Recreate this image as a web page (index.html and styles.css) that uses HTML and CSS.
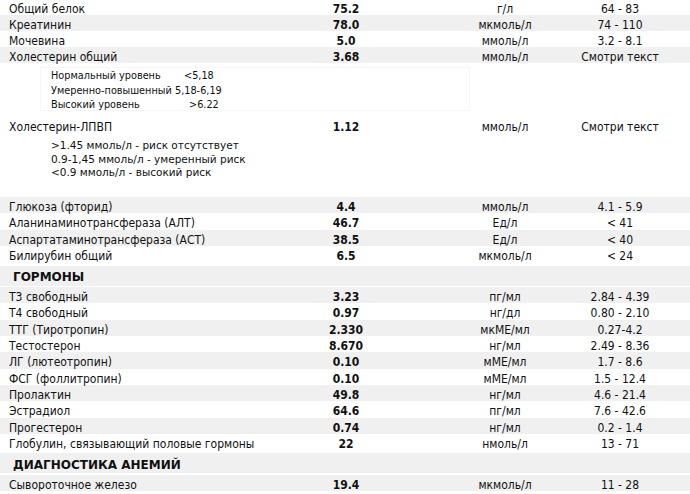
FILE: index.html
```html
<!DOCTYPE html>
<html lang="ru">
<head>
<meta charset="utf-8">
<title>Результаты анализов</title>
<link rel="stylesheet" href="styles.css">
</head>
<body>
<div class="report">
  <div class="section first">
    <div class="row"><div class="name">Общий белок</div><div class="val">75.2</div><div class="unit">г/л</div><div class="ref">64 - 83</div></div>
    <div class="row alt"><div class="name">Креатинин</div><div class="val">78.0</div><div class="unit">мкмоль/л</div><div class="ref">74 - 110</div></div>
    <div class="row"><div class="name">Мочевина</div><div class="val">5.0</div><div class="unit">ммоль/л</div><div class="ref">3.2 - 8.1</div></div>
    <div class="row alt"><div class="name">Холестерин общий</div><div class="val">3.68</div><div class="unit">ммоль/л</div><div class="ref">Смотри текст</div></div>
  </div>

  <div class="note-box">
    <div class="note-grid">
      <div>Нормальный уровень</div><div class="nv nv1">&lt;5,18</div>
      <div>Умеренно-повышенный</div><div class="nv">5,18-6,19</div>
      <div>Высокий уровень</div><div class="nv nv3">&gt;6.22</div>
    </div>
  </div>

  <div class="row lone"><div class="name">Холестерин-ЛПВП</div><div class="val">1.12</div><div class="unit">ммоль/л</div><div class="ref">Смотри текст</div></div>

  <div class="note-list">
    <div>&gt;1.45 ммоль/л - риск отсутствует</div>
    <div>0.9-1,45 ммоль/л - умеренный риск</div>
    <div>&lt;0.9 ммоль/л - высокий риск</div>
  </div>

  <div class="section">
    <div class="row alt"><div class="name">Глюкоза (фторид)</div><div class="val">4.4</div><div class="unit">ммоль/л</div><div class="ref">4.1 - 5.9</div></div>
    <div class="row"><div class="name">Аланинаминотрансфераза (АЛТ)</div><div class="val">46.7</div><div class="unit">Ед/л</div><div class="ref">&lt; 41</div></div>
    <div class="row alt"><div class="name">Аспартатаминотрансфераза (АСТ)</div><div class="val">38.5</div><div class="unit">Ед/л</div><div class="ref">&lt; 40</div></div>
    <div class="row"><div class="name">Билирубин общий</div><div class="val">6.5</div><div class="unit">мкмоль/л</div><div class="ref">&lt; 24</div></div>
  </div>

  <div class="head">ГОРМОНЫ</div>

  <div class="section">
    <div class="row alt"><div class="name">Т3 свободный</div><div class="val">3.23</div><div class="unit">пг/мл</div><div class="ref">2.84 - 4.39</div></div>
    <div class="row"><div class="name">Т4 свободный</div><div class="val">0.97</div><div class="unit">нг/дл</div><div class="ref">0.80 - 2.10</div></div>
    <div class="row alt"><div class="name">ТТГ (Тиротропин)</div><div class="val">2.330</div><div class="unit">мкМЕ/мл</div><div class="ref">0.27-4.2</div></div>
    <div class="row"><div class="name">Тестостерон</div><div class="val">8.670</div><div class="unit">нг/мл</div><div class="ref">2.49 - 8.36</div></div>
    <div class="row alt"><div class="name">ЛГ (лютеотропин)</div><div class="val">0.10</div><div class="unit">мМЕ/мл</div><div class="ref">1.7 - 8.6</div></div>
    <div class="row"><div class="name">ФСГ (фоллитропин)</div><div class="val">0.10</div><div class="unit">мМЕ/мл</div><div class="ref">1.5 - 12.4</div></div>
    <div class="row alt"><div class="name">Пролактин</div><div class="val">49.8</div><div class="unit">нг/мл</div><div class="ref">4.6 - 21.4</div></div>
    <div class="row"><div class="name">Эстрадиол</div><div class="val">64.6</div><div class="unit">пг/мл</div><div class="ref">7.6 - 42.6</div></div>
    <div class="row alt"><div class="name">Прогестерон</div><div class="val">0.74</div><div class="unit">нг/мл</div><div class="ref">0.2 - 1.4</div></div>
    <div class="row"><div class="name">Глобулин, связывающий половые гормоны</div><div class="val">22</div><div class="unit">нмоль/л</div><div class="ref">13 - 71</div></div>
  </div>

  <div class="head head2">ДИАГНОСТИКА АНЕМИЙ</div>

  <div class="section">
    <div class="row alt"><div class="name">Сывороточное железо</div><div class="val">19.4</div><div class="unit">мкмоль/л</div><div class="ref">11 - 28</div></div>
  </div>
</div>
</body>
</html>
```

FILE: styles.css
```css
html, body {
  margin: 0;
  padding: 0;
  background: #ffffff;
}

body {
  font-family: "DejaVu Sans Condensed", "DejaVu Sans", sans-serif;
  font-size: 12px;
  color: #111111;
  overflow: hidden;
}

.report {
  width: 690px;
}

.section.first {
  margin-top: -1px;
}

.row {
  display: grid;
  grid-template-columns: 230px 232px 86px 1fr;
  box-sizing: border-box;
  height: 16.3px;
  padding-top: 2px;
  line-height: 16.3px;
  white-space: nowrap;
}

.section.first .row {
  height: 16px;
  line-height: 16px;
}

.row.alt {
  background: #f0f0f0;
}

.name {
  padding-left: 9px;
}

.val {
  text-align: center;
  font-weight: bold;
}

.unit {
  text-align: center;
}

.ref {
  text-align: center;
  padding-left: 2px;
}

.note-box {
  margin: 4px 0 0 40px;
  width: 430px;
  height: 44px;
  border: 1px solid #f6f6f6;
  padding: 1px 0 0 10px;
  box-sizing: border-box;
  font-size: 10.8px;
}

.note-grid {
  display: grid;
  grid-template-columns: 124px auto;
  line-height: 14.5px;
}

.nv1 {
  padding-left: 9px;
}

.nv3 {
  padding-left: 14px;
}

.row.lone {
  margin-top: 6px;
}

.note-list {
  padding: 6px 0 0 51px;
  font-family: "DejaVu Sans", sans-serif;
  font-size: 10.5px;
  line-height: 13.5px;
  height: 63.7px;
  box-sizing: border-box;
}

.head {
  box-sizing: border-box;
  margin-top: 4px;
  margin-bottom: 1px;
  height: 20px;
  padding-top: 1px;
  line-height: 20px;
  background: #f0f0f0;
  font-family: "DejaVu Sans", sans-serif;
  font-weight: bold;
  font-size: 12px;
  padding-left: 13px;
}

.head2 {
  margin-top: 3px;
  margin-bottom: 2px;
  padding-top: 2px;
}
```
